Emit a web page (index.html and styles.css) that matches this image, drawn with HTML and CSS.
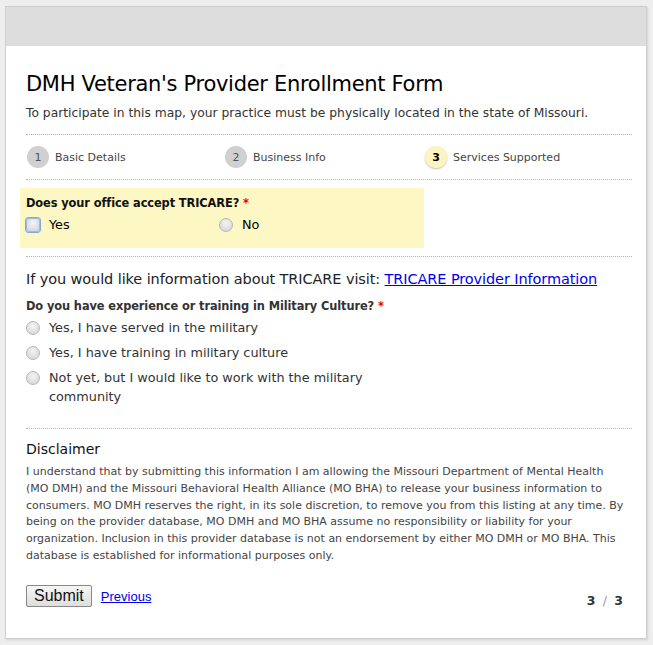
FILE: index.html
```html
<!DOCTYPE html>
<html>
<head>
<meta charset="utf-8">
<link rel="stylesheet" href="styles.css">
</head>
<body>
<div class="card">
  <div class="band"></div>
  <div class="content">
    <h1 class="title">DMH Veteran's Provider Enrollment Form</h1>
    <p class="subtitle">To participate in this map, your practice must be physically located in the state of Missouri.</p>
    <div class="steps">
      <div class="step"><span class="num">1</span><span class="label">Basic Details</span></div>
      <div class="step"><span class="num">2</span><span class="label">Business Info</span></div>
      <div class="step active"><span class="num">3</span><span class="label">Services Supported</span></div>
    </div>
    <div class="section">
      <div class="tricare">
        <div class="qlabel">Does your office accept TRICARE? <span class="req">*</span></div>
        <div class="opts-row">
          <label class="opt focus"><span class="radio"></span><span>Yes</span></label>
          <label class="opt"><span class="radio"></span><span>No</span></label>
        </div>
      </div>
    </div>
    <div class="section mil">
      <p class="info">If you would like information about TRICARE visit: <a href="#">TRICARE Provider Information</a></p>
      <div class="qlabel">Do you have experience or training in Military Culture? <span class="req">*</span></div>
      <div class="opts-col">
        <label class="opt"><span class="radio"></span><span>Yes, I have served in the military</span></label>
        <label class="opt"><span class="radio"></span><span>Yes, I have training in military culture</span></label>
        <label class="opt"><span class="radio"></span><span>Not yet, but I would like to work with the military community</span></label>
      </div>
    </div>
    <div class="section disc">
      <h2 class="dtitle">Disclaimer</h2>
      <p class="dtext">I understand that by submitting this information I am allowing the Missouri Department of Mental Health (MO DMH) and the Missouri Behavioral Health Alliance (MO BHA) to release your business information to consumers. MO DMH reserves the right, in its sole discretion, to remove you from this listing at any time. By being on the provider database, MO DMH and MO BHA assume no responsibility or liability for your organization. Inclusion in this provider database is not an endorsement by either MO DMH or MO BHA. This database is established for informational purposes only.</p>
    </div>
    <div class="footer">
      <button class="submit">Submit</button>
      <a href="#" class="prev">Previous</a>
      <span class="pages">3 <span class="slash">/</span> 3</span>
    </div>
  </div>
</div>
</body>
</html>
```

FILE: styles.css
```css
html, body {
  margin: 0;
  padding: 0;
  background: #eeeeee;
}
body {
  padding: 6px 6px 8px 5px;
  font-family: "DejaVu Sans", Verdana, sans-serif;
  color: #222;
}
.card {
  background: #fff;
  border: 1px solid #cfcfcf;
  box-shadow: 1px 1px 2px rgba(0,0,0,0.12);
  width: 640px;
}
.band {
  height: 39px;
  background: #dddddd;
}
.content {
  padding: 0 14px 30px 14px;
}
.title {
  margin: 0;
  padding: 24px 0 0 6px;
  font-weight: normal;
  font-size: 21px;
  letter-spacing: -0.3px;
  color: #000;
  line-height: 28px;
}
.subtitle {
  margin: 7px 0 0 6px;
  padding: 0 0 13px;
  font-size: 12.3px;
  color: #333;
  line-height: 16px;
  border-bottom: 1px dotted #b5b5b5;
}
.steps {
  display: grid;
  grid-template-columns: 198px 200px 1fr;
  margin-left: 6px;
  padding: 11px 0 11px 1px;
  border-bottom: 1px dotted #b5b5b5;
}
.step {
  display: flex;
  align-items: center;
  gap: 6px;
  font-size: 11px;
  color: #444;
}
.num {
  width: 22px;
  height: 22px;
  border-radius: 50%;
  background: #d0d0d0;
  color: #555;
  display: flex;
  align-items: center;
  justify-content: center;
  font-size: 11px;
}
.step.active .num {
  background: #fdf5c0;
  color: #000;
  font-weight: bold;
  box-shadow: 0 1px 2px rgba(0,0,0,0.25);
}
.section {
  border-bottom: 1px dotted #b5b5b5;
  margin-left: 6px;
}
.tricare {
  background: #fdf7c3;
  width: 404px;
  margin: 8px 0 8px -6px;
  padding: 7px 0 7px 6px;
  box-sizing: border-box;
  height: 60px;
}
.qlabel {
  font-size: 11.4px;
  font-weight: bold;
  color: #111;
  line-height: 16px;
  letter-spacing: -0.1px;
}
.req {
  color: #e00;
}
.opts-row {
  display: grid;
  grid-template-columns: 193px 1fr;
  margin-top: 4px;
}
.opt {
  display: flex;
  align-items: flex-start;
  gap: 9px;
  font-size: 12.8px;
  color: #333;
  line-height: 19px;
}
.tricare .opt {
  color: #000;
}
.radio {
  flex: none;
  width: 12px;
  height: 12px;
  margin-top: 3px;
  border-radius: 50%;
  border: 1px solid #b8b8b8;
  background: radial-gradient(circle at 50% 35%, #f4f4f4, #d2d2d2);
}
.opt.focus .radio {
  box-shadow: 0 0 0 1px #7fa6e0;
  border-radius: 3px;
  border-color: #9ab8e8;
}
.mil {
  padding: 12px 0 22px;
}
.info {
  margin: 0;
  font-size: 14.5px;
  color: #222;
  line-height: 20px;
  letter-spacing: -0.1px;
}
.info a {
  color: #0000ee;
}
.mil .qlabel {
  margin-top: 9px;
  color: #333;
}
.opts-col {
  display: flex;
  flex-direction: column;
  gap: 6px;
  margin-top: 4px;
}
.opts-col .opt span:last-child {
  max-width: 330px;
}
.disc {
  border-bottom: none;
  padding-top: 11px;
}
.dtitle {
  margin: 0;
  font-size: 14px;
  font-weight: normal;
  color: #111;
  line-height: 18px;
}
.dtext {
  margin: 6px 0 0;
  width: 599px;
  font-size: 11px;
  line-height: 16.8px;
  color: #444;
}
.footer {
  display: flex;
  align-items: center;
  margin: 20px 0 0 6px;
}
.submit {
  font-family: "Liberation Sans", Arial, sans-serif;
  font-size: 16px;
  padding: 1px 7px;
  height: 22px;
  border: 1px solid #888;
  border-radius: 2px;
  background: linear-gradient(#f6f6f6, #dedede);
  color: #111;
}
.prev {
  font-family: "Liberation Sans", Arial, sans-serif;
  font-size: 13px;
  color: #0000ee;
  margin-left: 9px;
}
.pages {
  margin-left: auto;
  margin-right: 9px;
  margin-top: 8px;
  font-size: 12.5px;
  font-weight: bold;
  color: #333;
}
.slash {
  font-weight: normal;
  color: #999;
  padding: 0 3px;
}
```
